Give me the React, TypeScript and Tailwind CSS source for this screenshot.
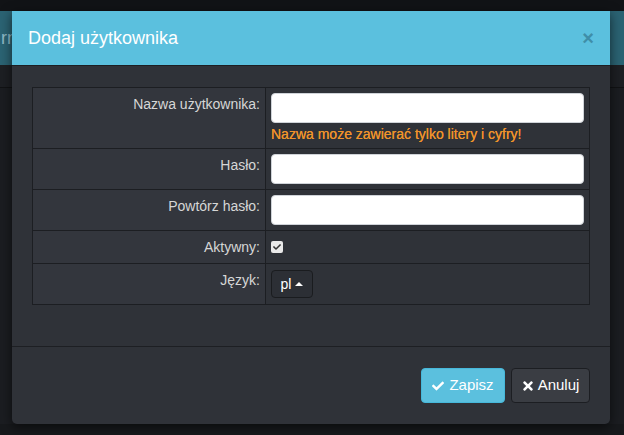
import { FaCheck, FaTimes } from 'react-icons/fa';

const font = { fontFamily: '"Liberation Sans", Arial, sans-serif' };

function LabelCell({ children }: { readonly children: string }) {
  return (
    <td className="w-[233px] border border-[#1c1e22] bg-[#33363d] pr-[5px] pt-[6px] align-top text-right text-[14px] leading-[20px] text-[#d6d6d6]">
      {children}
    </td>
  );
}

function TextInput() {
  return <div className="h-[30px] w-full rounded-[4px] border border-[#cfd3d8] bg-white" />;
}

export default function App() {
  return (
    <div className="relative h-[435px] w-[624px] overflow-hidden bg-[#17191c]" style={font}>
      {/* page behind the backdrop */}
      <div className="h-[11px] bg-[#111316]" />
      <div className="flex h-[54px] items-center bg-[#2b6373] pl-[1px] text-[18px] text-[#8fb9c6]">rn</div>
      <div className="h-[22px] bg-[#1d1f23]" />
      <div className="h-px bg-[#111214]" />
      <div className="h-[336px] bg-[#1b1d21]" />

      {/* modal */}
      <div className="absolute left-[12px] top-[11px] w-[598px] rounded-b-[5px] bg-[#2f3238] shadow-[0_3px_12px_rgba(0,0,0,0.6)]">
        <div className="flex h-[55px] items-center justify-between border-b border-[#1d1f23] bg-[#5bc0de] pl-[16px] pr-[16px]">
          <h4 className="text-[18px] leading-none text-white">Dodaj użytkownika</h4>
          <span className="text-[20px] font-bold leading-none text-[#3f8ea8]">×</span>
        </div>

        <div className="px-[20px] pb-[41px] pt-[21px]">
          <table className="w-full border-collapse">
            <tbody>
              <tr className="h-[61px]">
                <LabelCell>Nazwa użytkownika:</LabelCell>
                <td className="border border-[#1c1e22] bg-[#2f3238] px-[5px] pt-[5px] align-top">
                  <TextInput />
                  <p className="mt-[1px] text-[14px] leading-[20px] text-[#f0932b] [text-shadow:0_0_0.4px_#f0932b]">
                    Nazwa może zawierać tylko litery i cyfry!
                  </p>
                </td>
              </tr>
              <tr className="h-[41px]">
                <LabelCell>Hasło:</LabelCell>
                <td className="border border-[#1c1e22] bg-[#2f3238] px-[5px] align-middle">
                  <TextInput />
                </td>
              </tr>
              <tr className="h-[41px]">
                <LabelCell>Powtórz hasło:</LabelCell>
                <td className="border border-[#1c1e22] bg-[#2f3238] px-[5px] align-middle">
                  <TextInput />
                </td>
              </tr>
              <tr className="h-[33px]">
                <LabelCell>Aktywny:</LabelCell>
                <td className="border border-[#1c1e22] bg-[#2f3238] px-[5px] align-middle">
                  <div className="flex h-[12px] w-[12px] items-center justify-center rounded-[2px] bg-[#e9e9e9]">
                    <FaCheck className="h-[8px] w-[8px] text-[#333]" />
                  </div>
                </td>
              </tr>
              <tr className="h-[41px]">
                <LabelCell>Język:</LabelCell>
                <td className="border border-[#1c1e22] bg-[#2f3238] px-[5px] pt-[6px] align-top">
                  <div className="flex h-[28px] w-[42px] items-center justify-center gap-[4px] rounded-[4px] border border-[#1a1c1f] bg-[#2c2f35] text-[14px] text-white">
                    <span>pl</span>
                    <span className="mt-[-1px] h-0 w-0 border-x-[4px] border-b-[4px] border-x-transparent border-b-white" />
                  </div>
                </td>
              </tr>
            </tbody>
          </table>
        </div>

        <div className="flex justify-end gap-[6px] border-t border-[#1d1f23] px-[20px] pb-[21px] pt-[21px]">
          <button className="flex h-[35px] w-[84px] items-center justify-center gap-[5px] rounded-[4px] border border-[#46b8da] bg-[#5bc0de] text-[15px] text-white">
            <FaCheck className="h-[12px] w-[12px]" />
            Zapisz
          </button>
          <button className="flex h-[35px] w-[79px] items-center justify-center gap-[4px] rounded-[4px] border border-[#1c1e22] bg-[#3a3d43] text-[15px] text-white">
            <FaTimes className="h-[14px] w-[12px]" />
            Anuluj
          </button>
        </div>
      </div>
    </div>
  );
}
